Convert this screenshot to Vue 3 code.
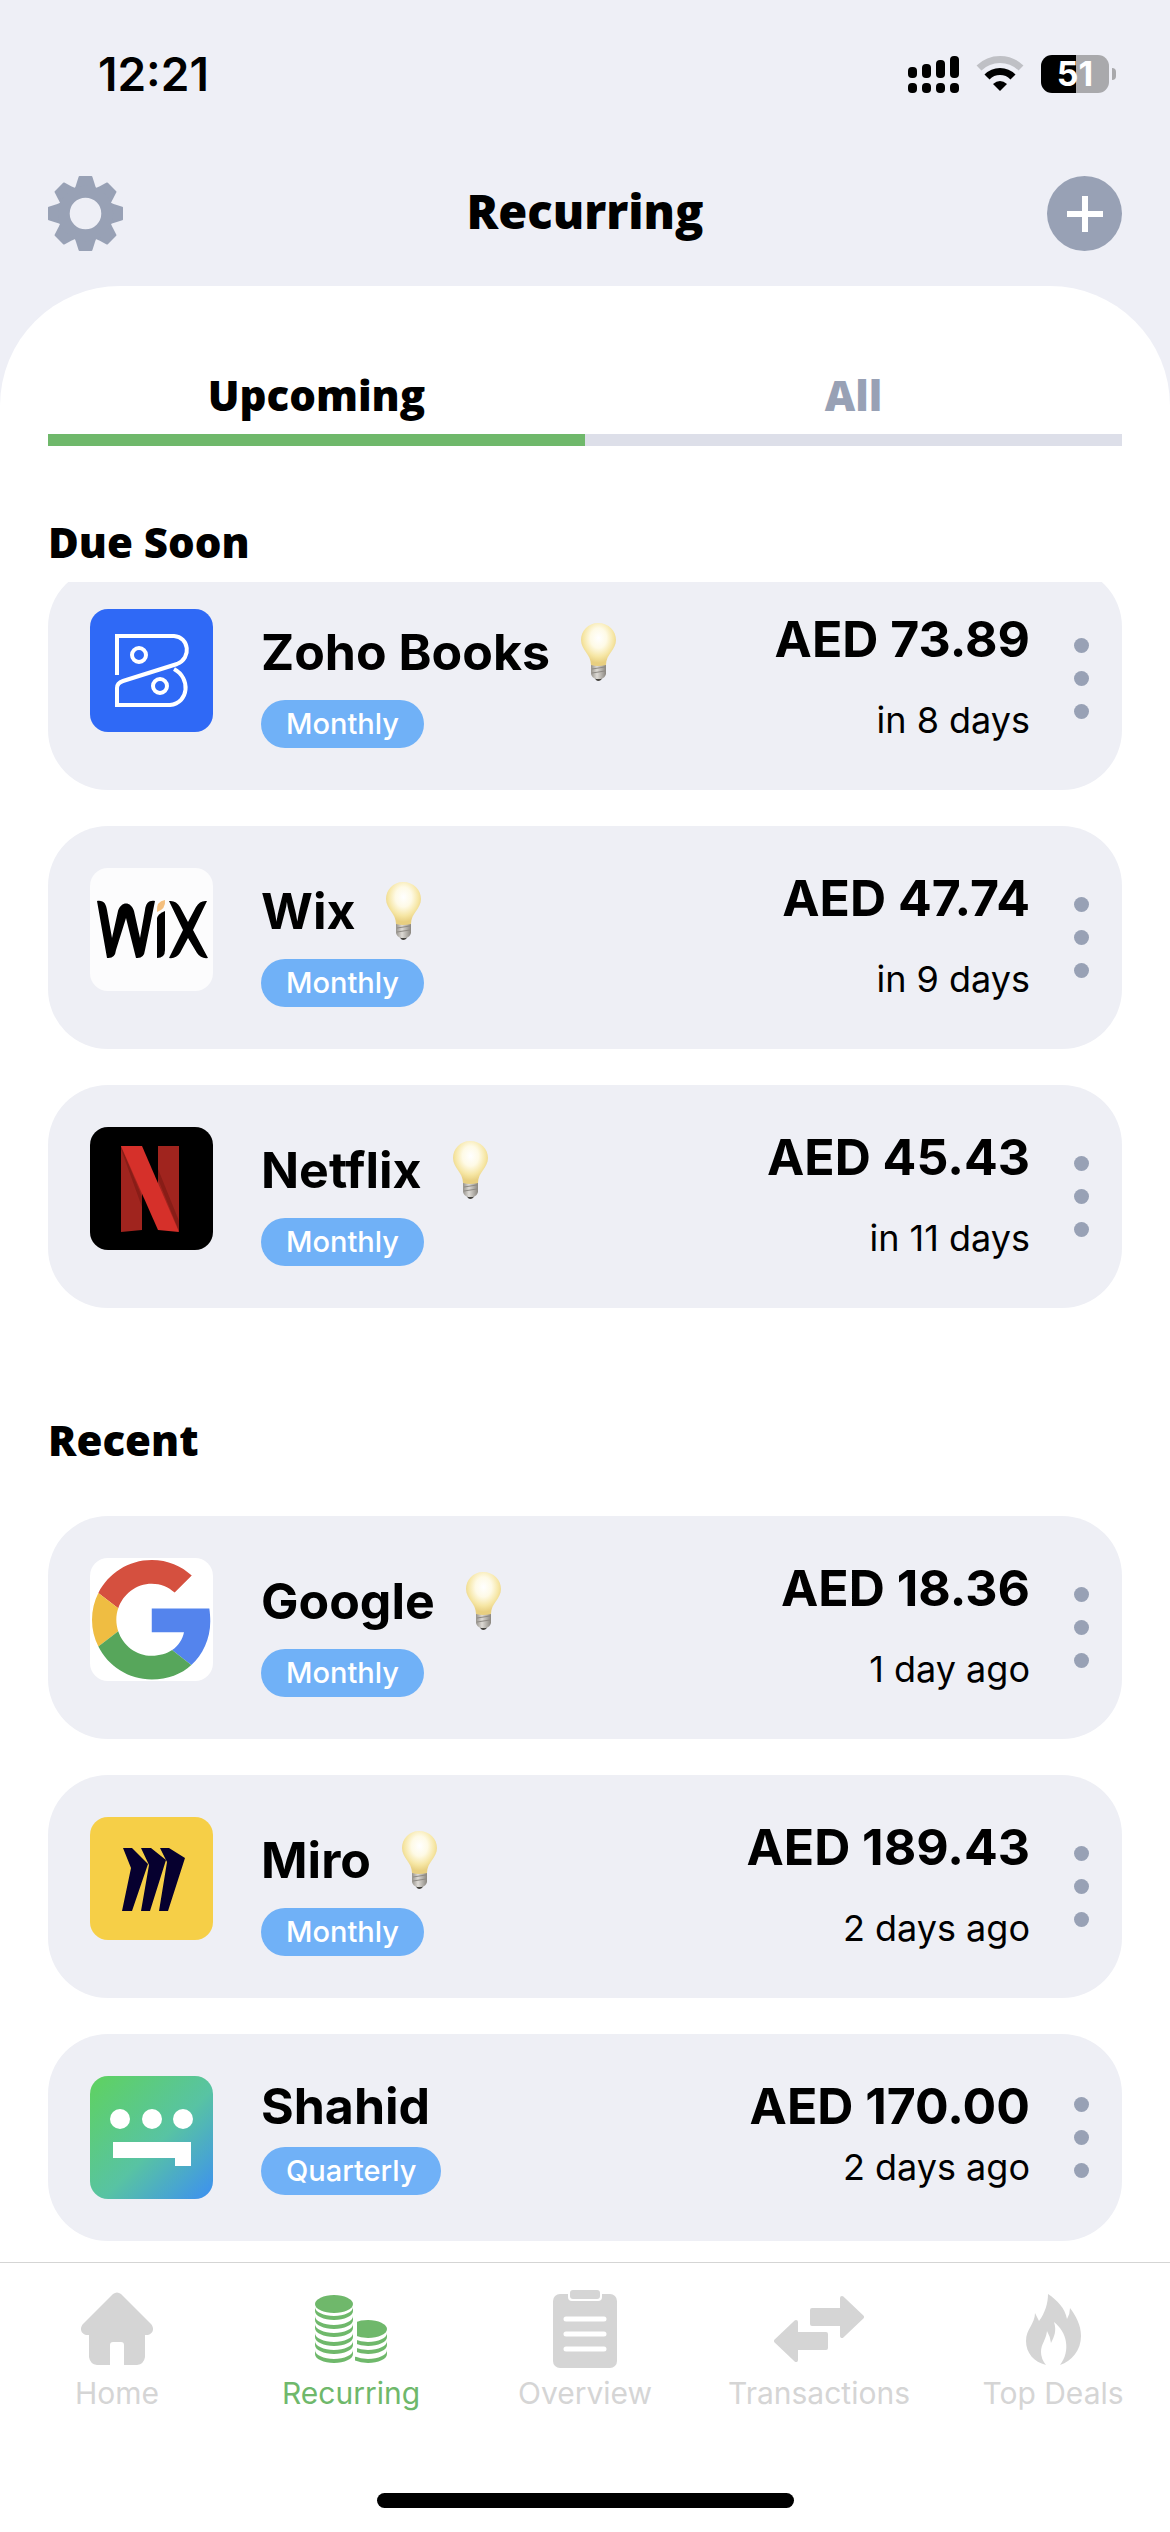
<script setup>
import { ref } from 'vue'

const tab = ref('upcoming')

const sections = [
  {
    title: 'Due Soon',
    scrolled: true,
    items: [
      { id: 'zoho', name: 'Zoho Books', cycle: 'Monthly', amount: 'AED 73.89', when: 'in 8 days', hint: true },
      { id: 'wix', name: 'Wix', cycle: 'Monthly', amount: 'AED 47.74', when: 'in 9 days', hint: true },
      { id: 'netflix', name: 'Netflix', cycle: 'Monthly', amount: 'AED 45.43', when: 'in 11 days', hint: true },
    ],
  },
  {
    title: 'Recent',
    scrolled: false,
    items: [
      { id: 'google', name: 'Google', cycle: 'Monthly', amount: 'AED 18.36', when: '1 day ago', hint: true },
      { id: 'miro', name: 'Miro', cycle: 'Monthly', amount: 'AED 189.43', when: '2 days ago', hint: true },
      { id: 'shahid', name: 'Shahid', cycle: 'Quarterly', amount: 'AED 170.00', when: '2 days ago', hint: false },
    ],
  },
]

const navItems = [
  { id: 'home', label: 'Home' },
  { id: 'recurring', label: 'Recurring' },
  { id: 'overview', label: 'Overview' },
  { id: 'transactions', label: 'Transactions' },
  { id: 'deals', label: 'Top Deals' },
]

const gearTeeth = [0, 45, 90, 135, 180, 225, 270, 315]
const tallStack = [25, 34, 42, 51, 59, 68]
const shortStack = [51, 59, 68]

// Lower rim of one coin, b being its bottom edge
const rim = (x, b) =>
  `M${x} ${b - 13}V${b - 9}A19 9 0 0 0 ${x + 38} ${b - 9}V${b - 13}A19 9 0 0 1 ${x} ${b - 13}Z`
</script>

<template>
  <div class="app">
    <div class="status">
      <span class="clock">12:21</span>
      <div class="indicators">
        <svg class="signal" width="51" height="38" viewBox="0 0 51 38" aria-hidden="true">
          <rect x="0" y="12" width="9" height="11" rx="4" />
          <rect x="14" y="9" width="9" height="14" rx="4" />
          <rect x="28" y="5" width="9" height="18" rx="4" />
          <rect x="42" y="1" width="9" height="22" rx="4" />
          <rect x="0" y="28" width="9" height="10" rx="4" />
          <rect x="14" y="28" width="9" height="10" rx="4" />
          <rect x="28" y="28" width="9" height="10" rx="4" />
          <rect x="42" y="28" width="9" height="10" rx="4" />
        </svg>
        <svg class="wifi" width="48" height="38" viewBox="0 0 48 38" aria-hidden="true">
          <path d="M3 13A30 30 0 0 1 45 13" fill="none" stroke="#bfc0c5" stroke-width="7" />
          <path d="M11 22A18 18 0 0 1 37 22" fill="none" stroke="#000" stroke-width="7" />
          <path d="M17 29Q24 23 31 29L24 36Z" />
        </svg>
        <div class="battery"><span class="battery-level">51</span></div>
      </div>
    </div>

    <header class="header">
      <button class="icon-button" aria-label="Settings">
        <svg width="75" height="75" viewBox="-38 -38 76 76">
          <g fill="#98a1b5" stroke="#98a1b5" stroke-width="2" stroke-linejoin="round">
            <path v-for="a in gearTeeth" :key="a" d="M-12 -22Q-9 -26 -8.500 -29L-6 -37H6L8.500 -29Q9 -26 12 -22Z" :transform="`rotate(${a})`" />
          </g>
          <circle r="22" fill="none" stroke="#98a1b5" stroke-width="12" />
        </svg>
      </button>
      <h1 class="title">Recurring</h1>
      <button class="icon-button" aria-label="Add">
        <svg width="75" height="75" viewBox="0 0 75 75">
          <circle cx="37.500" cy="37.500" r="37.500" fill="#98a1b5" />
          <path d="M38 20V56M20 38H56" stroke="#fff" stroke-width="6" />
        </svg>
      </button>
    </header>

    <main class="sheet">
      <div class="tabs" role="tablist">
        <button class="tab" :class="{ active: tab === 'upcoming' }" role="tab" @click="tab = 'upcoming'">Upcoming</button>
        <button class="tab" :class="{ active: tab === 'all' }" role="tab" @click="tab = 'all'">All</button>
      </div>

      <section v-for="s in sections" :key="s.title" class="section" :class="{ scrolled: s.scrolled }">
        <h2 class="section-title">{{ s.title }}</h2>
        <div class="viewport">
          <ul class="list">
            <li v-for="item in s.items" :key="item.id" class="card" :class="{ hinted: item.hint }">
              <svg class="logo" width="123" height="123" viewBox="0 0 123 123" aria-hidden="true">
                <g v-if="item.id === 'zoho'">
                  <rect width="123" height="123" fill="#2f69f6" />
                  <g fill="none" stroke="#fff" stroke-width="4">
                    <path d="M27 66V27H84C99 28 102 49 87 55L33 72Q27 74 27 79V96H80C99 94 101 69 84 60" />
                    <circle cx="49" cy="46" r="7" />
                    <circle cx="70" cy="77" r="7" />
                  </g>
                </g>
                <g v-else-if="item.id === 'wix'">
                  <rect width="123" height="123" fill="#fcfcfd" />
                  <path d="M7 33C14 32 16 36 17 42L22 70L28 43C31 33 41 33 44 43L50 70L55 42C56 35 59 32 65 33L55 82Q54 91 46 90L36 50L26 82Q25 91 17 90Z" />
                  <path d="M67 50Q68 46 75 43V82Q75 90 67 90Z" />
                  <path d="M79 33Q86 32 90 39L98 54L106 39Q110 32 117 33L103 62L118 90Q111 91 107 85L98 70L90 85Q86 91 79 90L93 62Z" />
                  <path d="M67 44Q66 33 75 32Q76 41 67 44Z" fill="#f4bf7e" />
                </g>
                <g v-else-if="item.id === 'netflix'">
                  <rect width="123" height="123" />
                  <path d="M31 19H52V103L31 105Z" fill="#a0241e" />
                  <path d="M68 19H89V104L68 98Z" fill="#a0241e" />
                  <path d="M31 22L52 80V70L31 19ZM89 104V94L68 42V52Z" fill="#701510" opacity=".5" />
                  <path d="M31 19H52L89 105L68 103Z" fill="#d6302a" />
                </g>
                <g v-else-if="item.id === 'google'">
                  <rect width="123" height="123" fill="#fff" />
                  <g transform="translate(2 2) scale(2.490)">
                    <path fill="#d5503f" d="M24 9.500c3.540 0 6.710 1.220 9.210 3.600l6.850-6.850C35.900 2.380 30.470 0 24 0 14.620 0 6.510 5.380 2.560 13.220l7.980 6.190C12.430 13.720 17.740 9.500 24 9.500z" />
                    <path fill="#5484ed" d="M47.500 24.550c0-1.570-.150-3.590-.380-5.050H24v9.500h12.940c-.580 2.960-2.260 5.480-4.780 7.180l7.730 6c4.510-4.180 7.610-10.340 7.610-17.630z" />
                    <path fill="#efbd42" d="M10.530 28.590c-.480-1.450-.760-2.990-.760-4.590s.270-3.140.760-4.590l-7.980-6.190C.920 16.460 0 20.120 0 24c0 3.880.920 7.540 2.560 10.780l7.970-6.190z" />
                    <path fill="#57a65b" d="M24 48c6.480 0 11.930-2.130 15.890-5.810l-7.730-6c-2.150 1.450-4.920 2.300-8.160 2.300-6.260 0-11.570-4.220-13.470-9.910l-7.980 6.190C6.510 42.620 14.620 48 24 48z" />
                  </g>
                </g>
                <g v-else-if="item.id === 'miro'">
                  <rect width="123" height="123" fill="#f6cf47" />
                  <path d="M33 31H42L58 47L42 94H32L41 51ZM51 31H61L76 43L60 94H51L59 48ZM70 31H79L95 41L78 94H69L77 45Z" fill="#06002f" />
                </g>
                <g v-else>
                  <defs>
                    <linearGradient id="shahid-bg" x1="0" y1="0" x2="1" y2="1">
                      <stop offset="0" stop-color="#5fd25f" />
                      <stop offset=".550" stop-color="#58c3a3" />
                      <stop offset="1" stop-color="#3c8ff2" />
                    </linearGradient>
                  </defs>
                  <rect width="123" height="123" fill="url(#shahid-bg)" />
                  <g fill="#fff">
                    <circle cx="30" cy="43" r="10" />
                    <circle cx="62" cy="43" r="10" />
                    <circle cx="93" cy="43" r="10" />
                    <path d="M23 66H101V90H85V82H23Z" />
                  </g>
                </g>
              </svg>

              <div class="info">
                <div class="name-row">
                  <h3 class="name">{{ item.name }}</h3>
                  <svg v-if="item.hint" width="35" height="58" viewBox="0 0 35 58" role="img" aria-label="Tip">
                    <defs>
                      <radialGradient id="bulb-glow" cx=".5" cy=".350" r=".580">
                        <stop offset="0" stop-color="#fff" />
                        <stop offset=".4" stop-color="#fefae6" />
                        <stop offset=".750" stop-color="#f6e6a4" />
                        <stop offset="1" stop-color="#e8cf80" />
                      </radialGradient>
                      <linearGradient id="bulb-base" x1="0" y1="0" x2="1" y2="0">
                        <stop offset="0" stop-color="#97938c" />
                        <stop offset=".4" stop-color="#dddad5" />
                        <stop offset="1" stop-color="#8b8780" />
                      </linearGradient>
                    </defs>
                    <path d="M13 54H22L20 57Q17 59 15 57Z" fill="#45433f" />
                    <path d="M10 41H25V51Q24 55 20 56H15Q11 55 10 51Z" fill="url(#bulb-base)" />
                    <path d="M11 46L24 44M11 50L24 48" stroke="#8e8a84" stroke-width="1" />
                    <path d="M17 0C7 0 0 8 0 17C0 27 10 31 10 42Q17 44 25 42C25 31 35 27 35 17C35 8 28 0 17 0Z" fill="url(#bulb-glow)" />
                  </svg>
                </div>
                <span class="pill">{{ item.cycle }}</span>
              </div>

              <div class="figures">
                <span class="amount">{{ item.amount }}</span>
                <span class="when">{{ item.when }}</span>
              </div>

              <button class="more" :aria-label="`Options for ${item.name}`">
                <span class="dot"></span>
                <span class="dot"></span>
                <span class="dot"></span>
              </button>
            </li>
          </ul>
        </div>
      </section>
    </main>

    <footer class="footer">
      <nav class="nav">
        <a v-for="n in navItems" :key="n.id" href="#" class="nav-item" :class="{ current: n.id === 'recurring' }">
          <span class="nav-icon">
            <svg v-if="n.id === 'home'" width="72" height="74" viewBox="0 0 72 74" fill="currentColor">
              <path d="M32 2Q36 -1 40 2L70 32C75 38 70 44 64 43V65Q63 72 56 73H43V53Q43 50 40 50H32Q29 50 29 53V73H16Q9 72 8 65V43C2 44 -3 38 2 32Z" />
            </svg>
            <svg v-else-if="n.id === 'recurring'" width="72" height="68" viewBox="0 0 72 68" fill="currentColor">
              <defs>
                <clipPath id="coin-side"><path d="M42 20H72V68H40V62L42 60Z" /></clipPath>
              </defs>
              <ellipse cx="19" cy="9" rx="19" ry="9" />
              <path v-for="b in tallStack" :key="b" :d="rim(0, b)" />
              <g clip-path="url(#coin-side)">
                <ellipse cx="53" cy="34" rx="19" ry="9" />
                <path v-for="b in shortStack" :key="b" :d="rim(34, b)" />
              </g>
            </svg>
            <svg v-else-if="n.id === 'overview'" width="64" height="78" viewBox="0 0 64 78" fill="currentColor">
              <rect y="4" width="64" height="74" rx="7" />
              <rect x="15" y="-2" width="34" height="13" rx="4" fill="#fff" />
              <rect x="17" y="0" width="30" height="9" rx="3" />
              <path d="M13 29H51M13 44H51M13 59H51" stroke="#fff" stroke-width="5" stroke-linecap="round" />
            </svg>
            <svg v-else-if="n.id === 'transactions'" width="90" height="66" viewBox="0 0 90 66" fill="currentColor" stroke="currentColor" stroke-width="4" stroke-linejoin="round">
              <path d="M38 14H68V2L88 21L68 40V28H38Z" />
              <path d="M52 38H22V26L2 45L22 64V52H52Z" />
            </svg>
            <svg v-else width="55" height="71" viewBox="0 0 55 71" fill="currentColor">
              <path d="M22 0C31 6 39 14 41 25Q44 20 44 14C50 22 55 31 55 42C55 56 46 67 34 71C45 57 41 38 28 28C31 37 28 43 25 49Q24 42 21 37C20 46 15 50 15 58Q15 65 20 71C8 68 0 59 0 47C0 35 9 30 9 19L13 27C19 19 22 9 22 0Z" />
            </svg>
          </span>
          <span class="nav-label">{{ n.label }}</span>
        </a>
      </nav>
      <div class="home-bar"></div>
    </footer>
  </div>
</template>

<style>
body {
  margin: 0;
  background: #fff;
}
</style>

<style scoped>
.app {
  display: flex;
  flex-direction: column;
  min-height: 100vh;
  background: #eeeff6;
  color: #000;
  font-family: Inter, "Liberation Sans", sans-serif;
}

button {
  margin: 0;
  padding: 0;
  border: 0;
  background: none;
  font: inherit;
  color: inherit;
  cursor: pointer;
}

svg {
  display: block;
}

.status {
  display: flex;
  justify-content: space-between;
  align-items: center;
  height: 56px;
  padding: 46px 54px 0 98px;
}

.clock {
  font-size: 46px;
  line-height: 56px;
  font-weight: 600;
}

.indicators {
  display: flex;
  align-items: center;
  gap: 17px;
}

.battery {
  position: relative;
  display: flex;
  align-items: center;
  justify-content: center;
  width: 68px;
  height: 38px;
  margin-right: 7px;
  border-radius: 11px;
  background: linear-gradient(90deg, #000 52%, #a9a9ac 52%);
}

.battery::after {
  content: "";
  position: absolute;
  left: 71px;
  top: 13px;
  width: 4px;
  height: 12px;
  border-radius: 0 4px 4px 0;
  background: #a9a9ac;
}

.battery-level {
  font-size: 34px;
  line-height: 38px;
  font-weight: 700;
  color: #fff;
}

.header {
  display: flex;
  align-items: center;
  justify-content: space-between;
  padding: 74px 48px 35px;
}

.title {
  margin: 0;
  padding-bottom: 6px;
  font-family: "Open Sans", sans-serif;
  font-size: 47px;
  line-height: 60px;
  font-weight: 800;
}

.sheet {
  flex: 1;
  padding: 84px 48px 21px;
  border-radius: 120px 120px 0 0;
  background: #fff;
}

.tabs {
  display: flex;
  margin-bottom: 71px;
}

.tab {
  flex: 1;
  padding-bottom: 14px;
  border-bottom: 12px solid #dddfe9;
  font-family: "Open Sans", sans-serif;
  font-size: 42px;
  line-height: 50px;
  font-weight: 800;
  color: #98a1b5;
}

.tab.active {
  border-color: #6fb86b;
  color: #000;
}

.section + .section {
  margin-top: 107px;
}

.section-title {
  margin: 0 0 51px;
  font-family: "Open Sans", sans-serif;
  font-size: 42px;
  line-height: 50px;
  font-weight: 800;
}

.scrolled .section-title {
  margin-bottom: 15px;
}

.scrolled .viewport {
  overflow: hidden;
}

.scrolled .list {
  margin-top: -15px;
}

.list {
  display: flex;
  flex-direction: column;
  gap: 36px;
  margin: 0;
  padding: 0;
  list-style: none;
}

.card {
  display: flex;
  align-items: flex-start;
  padding: 42px 22px 42px 42px;
  border-radius: 60px;
  background: #eeeff5;
}

.logo {
  flex: none;
  border-radius: 18px;
}

.info {
  flex: 1;
  margin-left: 48px;
}

.name-row {
  display: flex;
  align-items: center;
  gap: 31px;
  margin-bottom: 11px;
}

.hinted .name-row {
  height: 74px;
  padding-top: 6px;
}

.name {
  margin: 0;
  font-size: 50px;
  line-height: 60px;
  font-weight: 700;
}

.pill {
  display: inline-block;
  padding: 0 25px;
  border-radius: 24px;
  background: #70b1f7;
  color: #fff;
  font-size: 29px;
  line-height: 48px;
  font-weight: 500;
  vertical-align: top;
}

.figures {
  display: flex;
  flex-direction: column;
  align-items: flex-end;
  gap: 10px;
}

.hinted .figures {
  gap: 30px;
}

.amount {
  font-size: 50px;
  line-height: 60px;
  font-weight: 700;
}

.when {
  font-size: 36px;
  line-height: 42px;
}

.more {
  display: flex;
  flex-direction: column;
  align-items: center;
  align-self: center;
  gap: 18px;
  width: 37px;
  margin-left: 33px;
}

.dot {
  width: 15px;
  height: 15px;
  border-radius: 50%;
  background: #98a1b5;
}

.footer {
  padding-bottom: 24px;
  border-top: 1px solid #d5d5d5;
  background: #fff;
}

.nav {
  display: flex;
  padding-top: 27px;
}

.nav-item {
  display: flex;
  flex: 1;
  flex-direction: column;
  align-items: center;
  gap: 7px;
  color: #d5d5d5;
  text-decoration: none;
}

.nav-item.current {
  color: #6fb86b;
}

.nav-icon {
  display: flex;
  align-items: center;
  height: 78px;
}

.nav-label {
  font-size: 30px;
  line-height: 36px;
}

.home-bar {
  width: 417px;
  height: 15px;
  margin: 82px auto 0;
  border-radius: 8px;
  background: #000;
}
</style>
